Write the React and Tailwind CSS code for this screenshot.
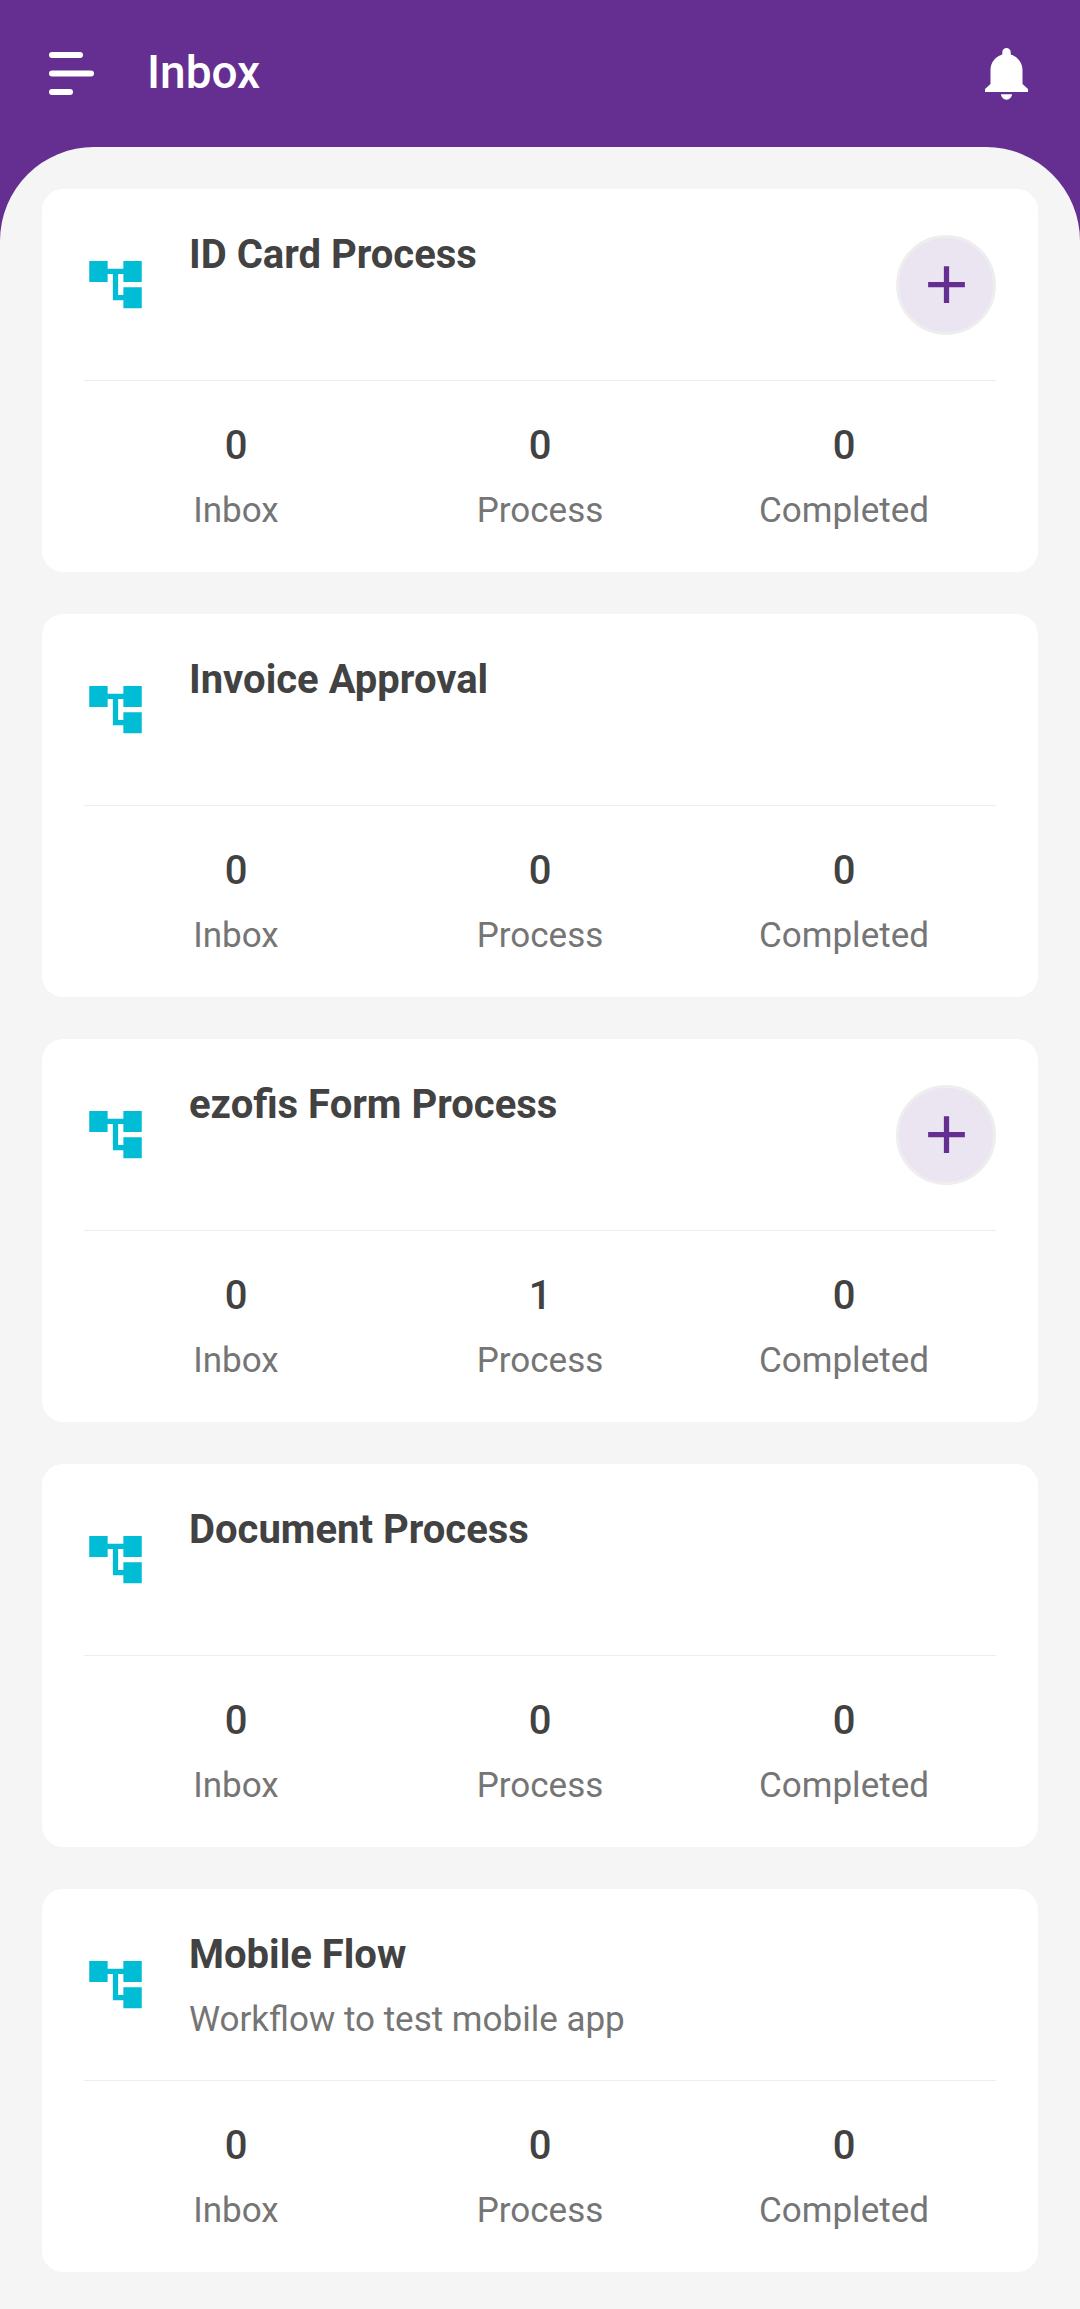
import { MdAccountTree, MdAdd } from "react-icons/md";

const processes = [
  { title: "ID Card Process", canAdd: true, inbox: 0, process: 0, completed: 0 },
  { title: "Invoice Approval", canAdd: false, inbox: 0, process: 0, completed: 0 },
  { title: "ezofis Form Process", canAdd: true, inbox: 0, process: 1, completed: 0 },
  { title: "Document Process", canAdd: false, inbox: 0, process: 0, completed: 0 },
  {
    title: "Mobile Flow",
    description: "Workflow to test mobile app",
    canAdd: false,
    inbox: 0,
    process: 0,
    completed: 0,
  },
];

function MenuIcon() {
  return (
    <svg viewBox="0 0 45 43" className="h-[43px] w-[45px]" fill="currentColor" aria-hidden="true">
      <rect x="0" y="0" width="34" height="6" rx="3" />
      <rect x="0" y="18.5" width="45" height="6" rx="3" />
      <rect x="0" y="37" width="24" height="6" rx="3" />
    </svg>
  );
}

function BellIcon() {
  return (
    <svg viewBox="0 0 43 52" className="h-[52px] w-[43px]" fill="currentColor" aria-hidden="true">
      <path d="M17.3 6.5V4.2a4.2 4.2 0 0 1 8.4 0v2.3C32.5 8.5 37.5 14.5 37.5 22v14l5.5 5V44H0v-3L5.5 36V22C5.5 14.5 10.5 8.5 17.3 6.5Z" />
      <path d="M16 46.2h11a5.5 5.5 0 0 1-11 0Z" />
    </svg>
  );
}

function Stat({ label, value }) {
  return (
    <div className="flex flex-col-reverse items-center gap-4">
      <dt className="text-[35px] leading-[48px] text-[#757575]">{label}</dt>
      <dd className="text-[40px] leading-[50px] font-medium text-[#424242]">{value}</dd>
    </div>
  );
}

function ProcessCard({ item }) {
  return (
    <li className="rounded-[21px] bg-white px-[42px]">
      <div className="flex h-[191px] items-center gap-[42px]">
        <MdAccountTree className="size-[63px] shrink-0 text-[#00bcd4]" aria-hidden="true" />
        <div className="flex min-w-0 flex-1 flex-col gap-4 self-stretch pt-[41px]">
          <h2 className="text-[40px] leading-[50px] font-bold text-[#424242]">{item.title}</h2>
          {item.description && (
            <p className="text-[35px] leading-[48px] text-[#757575]">{item.description}</p>
          )}
        </div>
        {item.canAdd && (
          <button
            type="button"
            aria-label={`Start ${item.title}`}
            className="flex size-[100px] shrink-0 items-center justify-center rounded-full border-3 border-[#eeeeee] bg-[#ebe5f2] text-[#642f91]"
          >
            <MdAdd className="size-[63px]" aria-hidden="true" />
          </button>
        )}
      </div>
      <dl className="grid grid-cols-3 border-t border-[#eeeeee] pt-[40px] pb-[37px]">
        <Stat label="Inbox" value={item.inbox} />
        <Stat label="Process" value={item.process} />
        <Stat label="Completed" value={item.completed} />
      </dl>
    </li>
  );
}

export default function App() {
  return (
    <div className="min-h-screen bg-[#642f91] font-['Roboto',sans-serif]">
      <header className="flex h-[147px] items-center pr-[52px] pl-[49px] text-white">
        <button type="button" aria-label="Open menu">
          <MenuIcon />
        </button>
        <h1 className="ml-[53px] flex-1 pb-[3px] text-[46px] leading-[56px] font-medium">Inbox</h1>
        <button type="button" aria-label="Notifications">
          <BellIcon />
        </button>
      </header>
      <main className="min-h-[calc(100vh-147px)] rounded-t-[94px] bg-[#f5f5f5] px-[42px] pt-[42px] pb-[36px]">
        <ul className="flex flex-col gap-[42px]">
          {processes.map((item) => (
            <ProcessCard key={item.title} item={item} />
          ))}
        </ul>
      </main>
    </div>
  );
}
